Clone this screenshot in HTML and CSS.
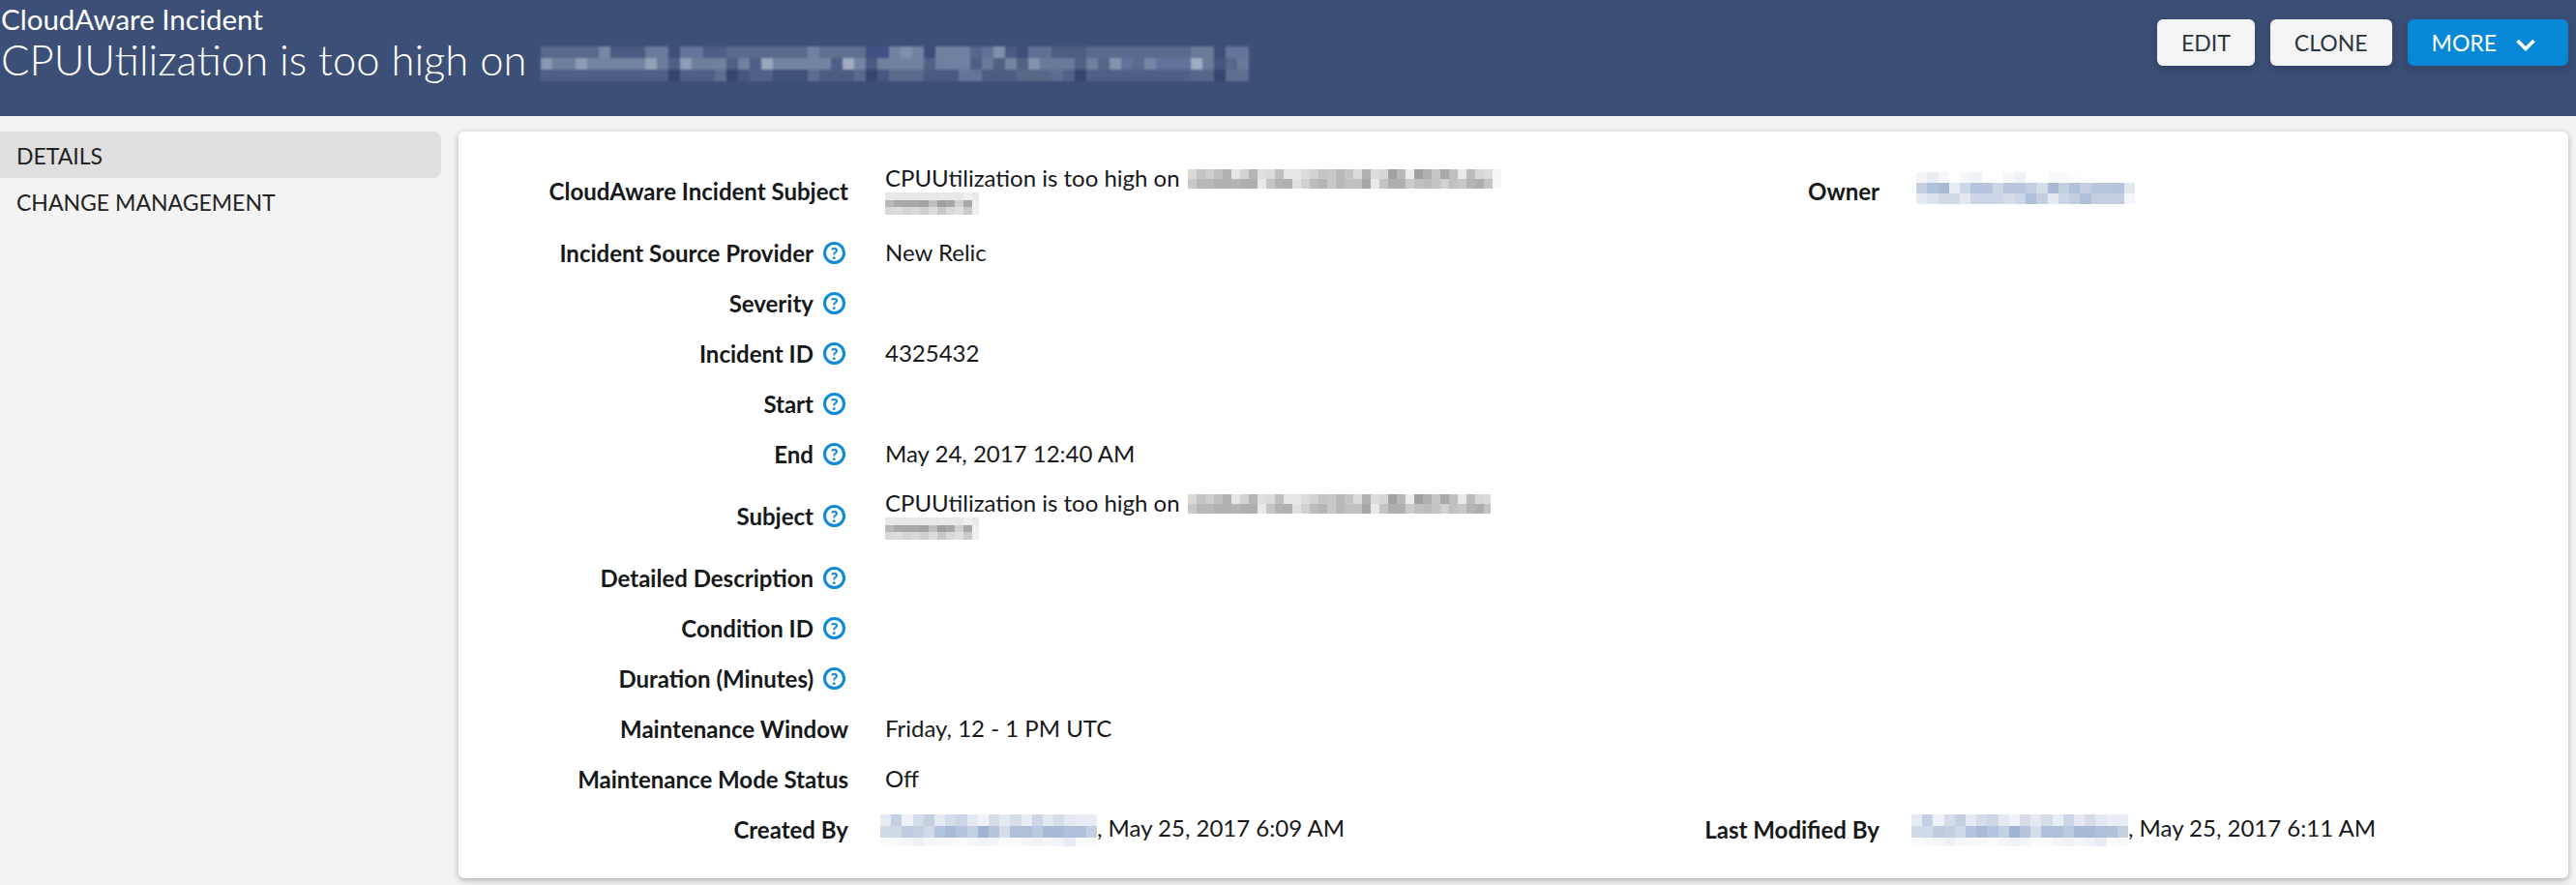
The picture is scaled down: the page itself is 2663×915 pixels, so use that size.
FILE: index.html
```html
<!DOCTYPE html>
<html lang="en">
<head>
    <meta charset="UTF-8">
    <title>CloudAware Incident</title>
    <link rel="stylesheet" href="styles.css">
</head>
<body>

    <!-- Page header -->
    <header class="page-header">
        <div class="titles">
            <div class="object-type">CloudAware Incident</div>
            <h1 class="record-name">CPUUtilization is too high on <span class="smudge-title"></span></h1>
        </div>
        <div class="actions">
            <button class="btn">EDIT</button>
            <button class="btn">CLONE</button>
            <button class="btn btn-primary">MORE<svg class="chevron" viewBox="0 0 20 13"><path d="M1.5 2l8.5 8.5L18.5 2" fill="none" stroke="#fff" stroke-width="3.6"/></svg></button>
        </div>
    </header>

    <div class="content">
        <!-- Side tabs -->
        <nav class="side-nav">
            <a class="tab active">DETAILS</a>
            <a class="tab">CHANGE MANAGEMENT</a>
        </nav>

        <!-- Detail card -->
        <main class="card">
            <div class="row row-tall">
                <div class="label">CloudAware Incident Subject</div>
                <div class="value">CPUUtilization is too high on <span class="smudge-long"></span><br><span class="smudge-short"></span></div>
                <div class="label label-right">Owner</div>
                <div class="value"><span class="smudge-owner"></span></div>
            </div>
            <div class="row">
                <div class="label">Incident Source Provider <span class="help">?</span></div>
                <div class="value">New Relic</div>
            </div>
            <div class="row">
                <div class="label">Severity <span class="help">?</span></div>
                <div class="value"></div>
            </div>
            <div class="row">
                <div class="label">Incident ID <span class="help">?</span></div>
                <div class="value">4325432</div>
            </div>
            <div class="row">
                <div class="label">Start <span class="help">?</span></div>
                <div class="value"></div>
            </div>
            <div class="row">
                <div class="label">End <span class="help">?</span></div>
                <div class="value">May 24, 2017 12:40 AM</div>
            </div>
            <div class="row row-tall">
                <div class="label">Subject <span class="help">?</span></div>
                <div class="value">CPUUtilization is too high on <span class="smudge-long smudge-cut"></span><br><span class="smudge-short"></span></div>
            </div>
            <div class="row">
                <div class="label">Detailed Description <span class="help">?</span></div>
                <div class="value"></div>
            </div>
            <div class="row">
                <div class="label">Condition ID <span class="help">?</span></div>
                <div class="value"></div>
            </div>
            <div class="row">
                <div class="label">Duration (Minutes) <span class="help">?</span></div>
                <div class="value"></div>
            </div>
            <div class="row">
                <div class="label">Maintenance Window</div>
                <div class="value">Friday, 12 - 1 PM UTC</div>
            </div>
            <div class="row">
                <div class="label">Maintenance Mode Status</div>
                <div class="value">Off</div>
            </div>
            <div class="row">
                <div class="label">Created By</div>
                <div class="value"><span class="smudge-user"></span>, May 25, 2017 6:09 AM</div>
                <div class="label label-right">Last Modified By</div>
                <div class="value"><span class="smudge-user"></span>, May 25, 2017 6:11 AM</div>
            </div>
        </main>
    </div>

</body>
</html>
```

FILE: styles.css
```css
* {
    box-sizing: border-box;
}
body {
    margin: 0;
    height: 915px;
    overflow: hidden;
    background-color: #f3f3f3;
    font-family: Lato, "Open Sans", sans-serif;
    font-size: 24px;
    color: #16181a;
    font-variant-ligatures: common-ligatures;
}
/* Header */
.page-header {
    display: flex;
    justify-content: space-between;
    height: 120px;
    background-color: #3c4f76;
    color: white;
    padding-left: 1px;
}
.object-type {
    font-size: 29.5px;
    line-height: 36px;
    margin-top: 2px;
}
.record-name {
    margin: -3px 0 0;
    font-size: 43.6px;
    font-weight: 300;
    line-height: 52px;
    display: flex;
    align-items: center;
    gap: 15px;
}
.actions {
    display: flex;
    gap: 16px;
    padding: 20px 8px 0 0;
}
.btn {
    height: 48px;
    padding: 0 25px;
    border: none;
    border-radius: 6px;
    background-color: #f4f4f4;
    color: #2b3540;
    font-family: inherit;
    font-size: 23px;
    box-shadow: 0 3px 10px rgba(20, 30, 50, 0.3);
}
.btn-primary {
    padding-right: 34px;
    background-color: #0688d6;
    color: white;
}
.chevron {
    width: 20px;
    height: 13px;
    margin-left: 20px;
}
/* Side tabs and card */
.content {
    display: flex;
    padding-top: 16px;
}
.side-nav {
    width: 456px;
    flex-shrink: 0;
}
.tab {
    display: block;
    height: 48px;
    line-height: 50px;
    padding-left: 17px;
    color: #222;
    font-size: 23px;
}
.tab.active {
    background-color: #dfdfdf;
    border-radius: 0 8px 8px 0;
}
.card {
    width: 2181px;
    height: 772px;
    margin-left: 18px;
    padding-top: 23px;
    background-color: white;
    border-radius: 6px;
    box-shadow: 0 2px 6px rgba(0, 0, 0, 0.3);
}
.row {
    display: grid;
    grid-template-columns: 403px 948px 118px 1fr;
    height: 52px;
    align-items: center;
}
.row-tall {
    height: 76px;
}
.label {
    font-weight: 700;
    white-space: nowrap;
    display: flex;
    justify-content: flex-end;
    align-items: center;
    gap: 10px;
}
.value {
    padding-left: 38px;
    line-height: 26px;
    white-space: nowrap;
}
.label-right {
    grid-column: 3;
}
.help {
    width: 23px;
    height: 23px;
    line-height: 17px;
    margin-right: 3px;
    border: 3px solid #0d8ad8;
    border-radius: 50%;
    color: #0d8ad8;
    font-size: 17px;
    font-weight: 900;
    text-align: center;
}
/* Blurred-out text, drawn as mosaic cells */
.smudge-title {
    display: block;
    width: 732px;
    height: 42px;
    margin-top: 5px;
    filter: blur(1px);
    background-repeat: no-repeat;
    background-size: 100% 12px;
    background-position: 0 5px, 0 17px, 0 29px;
    background-image:
        linear-gradient(90deg, #59698c 0 60px, #7787a6 60px 72px, #4a5b81 72px 108px, #6a7a9a 108px 132px, #3f5078 132px 144px, #64749a 144px 168px, #4d5e84 168px 192px, #5a6a8c 192px 276px, #7080a0 276px 288px, #5f6f90 288px 336px, #3f5180 336px 360px, #7282a0 360px 372px, #8090ac 372px 384px, #7282a0 384px 396px, #3c4f76 396px 408px, #7080a0 408px 444px, #556688 444px 456px, #62729a 456px 468px, #8090ac 468px 480px, #4a5b81 480px 492px, #3f5078 492px 504px, #607094 504px 528px, #4c5d82 528px 564px, #5a6a8c 564px 672px, #6a7a98 672px 696px, #3c4f76 696px 708px, #65759a 708px 732px),
        linear-gradient(90deg, #8a97b0 0 12px, #6f7f9e 12px 36px, #8f9cb5 36px 48px, #7383a1 48px 108px, #93a0b8 108px 120px, #6b7b9a 120px 132px, #4e5f85 132px 144px, #8f9cb5 144px 156px, #6f7f9e 156px 192px, #4e5f85 192px 204px, #7080a0 204px 216px, #4e5f85 216px 228px, #9aa6bc 228px 240px, #7383a1 240px 300px, #4e5f85 300px 312px, #a0acc2 312px 324px, #7383a1 324px 336px, #4a5b81 336px 348px, #7181a0 348px 396px, #506185 396px 408px, #7080a0 408px 444px, #4e5f85 444px 456px, #6a7a9a 456px 468px, #516285 468px 480px, #7383a1 480px 492px, #506185 492px 504px, #8592ae 504px 516px, #6a7a9a 516px 552px, #4f6085 552px 564px, #6f7f9e 564px 576px, #556688 576px 588px, #8592ae 588px 600px, #62729a 600px 612px, #5a6a8c 612px 624px, #7686a4 624px 636px, #62729a 636px 672px, #a0acc2 672px 684px, #6a7a9a 684px 696px, #445680 696px 708px, #566789 708px 720px, #6a7a9a 720px 732px),
        linear-gradient(90deg, #4f6086 0 132px, #34456e 132px 144px, #4f6086 144px 180px, #5f6f90 180px 192px, #35466f 192px 204px, #45577d 204px 216px, #50618a 216px 240px, #3f5179 240px 276px, #5d6d90 276px 288px, #4c5d82 288px 324px, #5a6a8c 324px 336px, #34456e 336px 348px, #465880 348px 360px, #5a6a8c 360px 396px, #485a80 396px 432px, #65759a 432px 456px, #4c5d82 456px 492px, #586889 492px 528px, #5d6d90 528px 540px, #50618a 540px 552px, #34456e 552px 564px, #4f6086 564px 672px, #566789 672px 696px, #35466f 696px 708px, #5f6f90 708px 732px);
}
.smudge-long,
.smudge-short,
.smudge-owner,
.smudge-user {
    display: inline-block;
    filter: blur(0.6px);
    background-repeat: no-repeat;
}
.smudge-long {
    width: 324px;
    height: 20px;
    margin-left: 2px;
    vertical-align: -2px;
    background-size: 100% 10px;
    background-position: 0 0, 0 10px;
    background-image:
        linear-gradient(90deg, #d8d8d8 0 9px, #c4c4c4 9px 18px, #cfcfcf 18px 27px, #c0c0c0 27px 36px, #b0b0b0 36px 45px, #e6e6e6 45px 54px, #d2d2d2 54px 63px, #b4b4b4 63px 72px, #e0e0e0 72px 81px, #dcdcdc 81px 90px, #c0c0c0 90px 99px, #e6e6e6 99px 117px, #dcdcdc 117px 126px, #d4d4d4 126px 135px, #c6c6c6 135px 144px, #c8c8c8 144px 153px, #b8b8b8 153px 162px, #c4c4c4 162px 171px, #dcdcdc 171px 180px, #b0b0b0 180px 189px, #dcdcdc 189px 198px, #d6d6d6 198px 207px, #a0a0a0 207px 216px, #b8b8b8 216px 225px, #ececec 225px 234px, #a0a0a0 234px 243px, #aeaeae 243px 252px, #c6c6c6 252px 261px, #a8a8a8 261px 270px, #c0c0c0 270px 279px, #eaeaea 279px 288px, #bcbcbc 288px 297px, #d8d8d8 297px 306px, #dcdcdc 306px 315px, #f4f4f4 315px 324px),
        linear-gradient(90deg, #c8c8c8 0 9px, #b8b8b8 9px 27px, #b0b0b0 27px 45px, #b4b4b4 45px 54px, #aeaeae 54px 72px, #e8e8e8 72px 81px, #c4c4c4 81px 90px, #b4b4b4 90px 99px, #b0b0b0 99px 108px, #e0e0e0 108px 117px, #d2d2d2 117px 126px, #bcbcbc 126px 135px, #b4b4b4 135px 144px, #c8c8c8 144px 153px, #b8b8b8 153px 162px, #c0c0c0 162px 180px, #a8a8a8 180px 189px, #e8e8e8 189px 198px, #c4c4c4 198px 207px, #aeaeae 207px 216px, #b0b0b0 216px 225px, #cacaca 225px 234px, #c0c0c0 234px 243px, #bcbcbc 243px 252px, #c4c4c4 252px 261px, #d0d0d0 261px 270px, #c0c0c0 270px 279px, #c8c8c8 279px 288px, #b4b4b4 288px 297px, #aeaeae 297px 306px, #c4c4c4 306px 315px, #f8f8f8 315px 324px);
}
.smudge-cut {
    width: 313px;
}
.smudge-short {
    width: 97px;
    height: 23px;
    vertical-align: -3px;
    background-size: 100% 8px;
    background-position: 0 0, 0 7px, 0 15px;
    background-image:
        linear-gradient(90deg, #e8e8e8 0 81px, #f0f0f0 81px 90px, #e8e8e8 90px 97px),
        linear-gradient(90deg, #b8b8b8 0 9px, #a8a8a8 9px 36px, #a4a4a4 36px 45px, #c0c0c0 45px 54px, #a0a0a0 54px 63px, #a8a8a8 63px 72px, #d0d0d0 72px 81px, #a8a8a8 81px 90px, #f0f0f0 90px 97px),
        linear-gradient(90deg, #d8d8d8 0 9px, #dcdcdc 9px 18px, #d4d4d4 18px 27px, #d8d8d8 27px 36px, #d0d0d0 36px 45px, #dcdcdc 45px 54px, #c8c8c8 54px 63px, #d8d8d8 63px 72px, #e0e0e0 72px 81px, #c8c8c8 81px 90px, #f0f0f0 90px 97px);
}
.smudge-owner {
    width: 226px;
    height: 33px;
    margin: -8px 0 -4px;
    vertical-align: -1px;
    background-size: 100% 11px;
    background-position: 0 0, 0 11px, 0 22px;
    background-image:
        linear-gradient(90deg, #f3f5f9 0 5%, #e8ecf4 5% 10%, #f5f7fa 10% 15%, #fff 15% 20%, #f5f7fa 20% 25%, #eff2f7 25% 30%, #fff 30% 40%, #f5f7fa 40% 45%, #eef1f6 45% 50%, #fff 50% 60%, #f8f9fb 60% 65%, #f9fafb 65% 70%, #fdfdfe 70% 75%, #fff 75% 100%),
        linear-gradient(90deg, #c3cfe1 0 5%, #aebfd8 5% 10%, #a9bad4 10% 15%, #e8ecf4 15% 20%, #ccd6e6 20% 25%, #b5c3dc 25% 35%, #ccd6e6 35% 40%, #b9c6dc 40% 50%, #c3cfe1 50% 55%, #d5dde9 55% 60%, #a9bad4 60% 65%, #c3cfe1 65% 70%, #b0c0d9 70% 75%, #c3cfe1 75% 80%, #b9c6dc 80% 90%, #b5c3dc 90% 95%, #e3e8f1 95% 100%),
        linear-gradient(90deg, #e3e8f1 0 5%, #dde3ee 5% 10%, #d0d9e6 10% 20%, #e3e8f1 20% 25%, #ccd6e6 25% 40%, #d5dde9 40% 45%, #ccd6e6 45% 50%, #aebfd8 50% 55%, #c3cfe1 55% 60%, #e3e8f1 60% 65%, #ccd6e6 65% 70%, #c3cfe1 70% 75%, #aebfd8 75% 80%, #c3cfe1 80% 95%, #f3f5f9 95% 100%);
}
.smudge-user {
    width: 224px;
    height: 33px;
    margin: -8px 0 -4px -5px;
    vertical-align: -6px;
    background-size: 100% 12px;
    background-position: 0 0, 0 12px, 0 24px;
    background-image:
        linear-gradient(90deg, #e6ebf3 0 5%, #c4d0e2 5% 10%, #eef1f6 10% 15%, #d5dde9 15% 20%, #c4d0e2 20% 25%, #e6ebf3 25% 30%, #d5dde9 30% 35%, #ccd6e6 35% 40%, #e3e8f1 40% 45%, #eef1f6 45% 50%, #d5dde9 50% 55%, #e3e8f1 55% 60%, #d5dde9 60% 65%, #e8ecf4 65% 70%, #ccd6e6 70% 75%, #e3e8f1 75% 80%, #d5dde9 80% 85%, #e3e8f1 85% 90%, #e8ecf4 90% 100%),
        linear-gradient(90deg, #d0d9e6 0 10%, #bfcbdf 10% 15%, #c4d0e2 15% 20%, #d0d9e6 20% 25%, #b5c3dc 25% 30%, #a9bad4 30% 35%, #b5c3dc 35% 40%, #c4d0e2 40% 45%, #a0b3d0 45% 50%, #b5c3dc 50% 55%, #d5dde9 55% 60%, #b0c0d9 60% 70%, #bccadf 70% 75%, #a9bad4 75% 85%, #b0c0d9 85% 95%, #c4d0e2 95% 100%),
        linear-gradient(90deg, #fbfcfd 0 5%, #f8f9fb 5% 10%, #f4f6f9 10% 15%, #eef1f6 15% 20%, #f4f6f9 20% 25%, #f8f9fb 25% 35%, #fbfcfd 35% 40%, #f4f6f9 40% 45%, #f0f2f7 45% 50%, #f4f6f9 50% 55%, #fbfcfd 55% 65%, #f4f6f9 65% 70%, #f0f2f7 70% 75%, #f4f6f9 75% 80%, #f0f2f7 80% 85%, #e8ecf4 85% 90%, #fbfcfd 90% 95%, #f8f9fb 95% 100%);
}
```
